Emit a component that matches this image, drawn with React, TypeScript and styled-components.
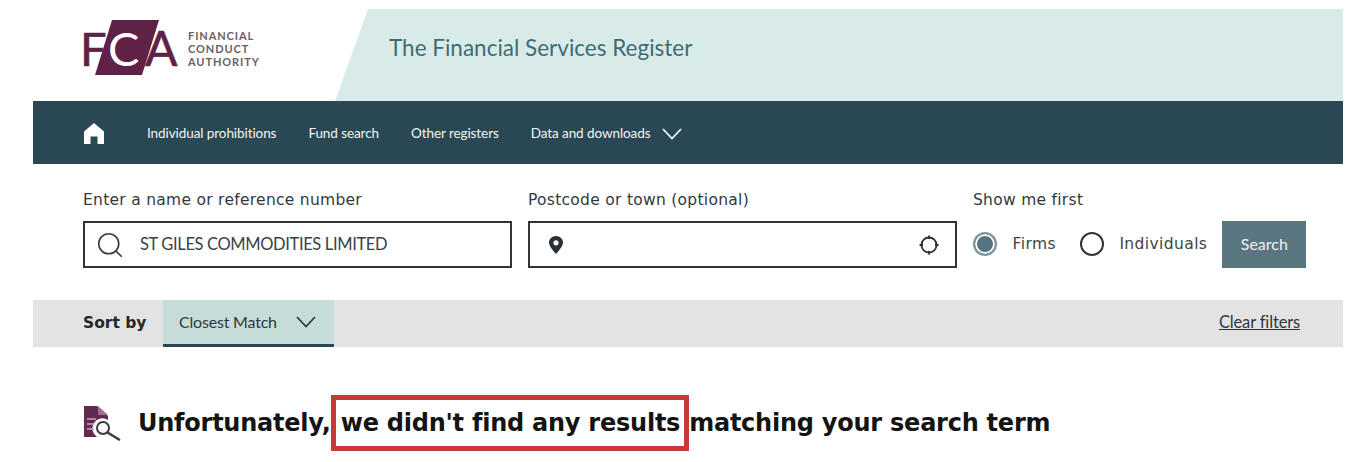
import styled, { createGlobalStyle } from "styled-components";
import { Search as SearchIcon } from "lucide-react";

const GlobalStyle = createGlobalStyle`
  html, body {
    margin: 0;
    background: #fff;
  }
`;

const NAV_ITEMS = ["Individual prohibitions", "Fund search", "Other registers"];

const FcaLogo = () => (
  <svg width="103" height="58" viewBox="-4 0 103 58" aria-label="FCA">
    <polygon points="28,0 75,0 58,55 11,55" fill="#5f2145" />
    <text x="-4" y="46" fontFamily="Lato, sans-serif" fontSize="47" fill="#5f2145" stroke="#5f2145" strokeWidth="0.6">F</text>
    <text x="24" y="46" fontFamily="Lato, sans-serif" fontSize="47" fill="#fff">C</text>
    <text x="61" y="46" fontFamily="Lato, sans-serif" fontSize="48" fill="#5f2145" stroke="#5f2145" strokeWidth="0.6">A</text>
  </svg>
);

const HomeIcon = () => (
  <svg width="22" height="22" viewBox="0 0 22 22">
    <path d="M11 1 L21 9.5 V22 H14.5 V14.5 H7.5 V22 H1 V9.5 Z" fill="#fff" />
  </svg>
);

const Chevron = () => (
  <svg width="20" height="12" viewBox="0 0 20 12" fill="none" stroke="currentColor" strokeWidth="1.8">
    <path d="M1 1 L10 10.5 L19 1" />
  </svg>
);

const PinIcon = () => (
  <svg width="16" height="20" viewBox="0 0 16 20">
    <path
      fillRule="evenodd"
      d="M8 1C4 1 1 4 1 7.6 1 12 8 19 8 19s7-7 7-11.4C15 4 12 1 8 1Zm0 4.2a2.6 2.6 0 1 1 0 5.2 2.6 2.6 0 0 1 0-5.2Z"
      fill="#2a2f33"
    />
  </svg>
);

const LocateIcon = () => (
  <svg width="20" height="20" viewBox="0 0 20 20" fill="none" stroke="#2a2f33">
    <circle cx="10" cy="10" r="7.5" strokeWidth="1.8" />
    <path d="M10 0.5v3.5M10 16v3.5M0.5 10h3.5M16 10h3.5" strokeWidth="1.8" />
  </svg>
);

const ResultsIcon = () => (
  <svg width="38" height="36" viewBox="0 0 38 36">
    <path d="M1 1 H14 L25 11 V15 A9 9 0 0 0 14 32 H1 Z" fill="#622a50" />
    <path d="M15 1 L25 10 H15 Z" fill="#9c6f8b" />
    <path d="M4 14h9M4 19h7M4 24h7" stroke="#c9a9bc" strokeWidth="1.6" />
    <circle cx="20" cy="23" r="6" fill="#fff" stroke="#3b3b40" strokeWidth="2" />
    <path d="M24.5 27.5 L36 34.5" stroke="#3b3b40" strokeWidth="2.6" strokeLinecap="round" />
  </svg>
);

export default function App() {
  return (
    <Page>
      <GlobalStyle />
      <Header>
        <LogoBlock>
          <FcaLogo />
          <LogoWords>
            <span>FINANCIAL</span>
            <span>CONDUCT</span>
            <span>AUTHORITY</span>
          </LogoWords>
        </LogoBlock>
        <TitleBand>
          <Title>The Financial Services Register</Title>
        </TitleBand>
      </Header>

      <Nav>
        <HomeLink><HomeIcon /></HomeLink>
        {NAV_ITEMS.map((item) => (
          <NavLink key={item}>{item}</NavLink>
        ))}
        <NavLink>
          Data and downloads
          <Chevron />
        </NavLink>
      </Nav>

      <SearchForm>
        <Field>
          <FieldLabel>Enter a name or reference number</FieldLabel>
          <InputBox>
            <SearchIcon size={30} strokeWidth={1.3} color="#3a3f42" />
            <InputText>ST GILES COMMODITIES LIMITED</InputText>
          </InputBox>
        </Field>
        <Field>
          <FieldLabel>Postcode or town (optional)</FieldLabel>
          <InputBox $tight>
            <PinIcon />
            <LocateIcon />
          </InputBox>
        </Field>
        <RadioField>
          <FieldLabel>Show me first</FieldLabel>
          <RadioRow>
            <RadioOption>
              <Radio $checked />
              Firms
            </RadioOption>
            <RadioOption>
              <Radio />
              Individuals
            </RadioOption>
            <SearchButton>Search</SearchButton>
          </RadioRow>
        </RadioField>
      </SearchForm>

      <SortBar>
        <SortLabel>Sort by</SortLabel>
        <SortSelect>
          Closest Match
          <Chevron />
        </SortSelect>
        <ClearFilters>Clear filters</ClearFilters>
      </SortBar>

      <Message>
        <ResultsIcon />
        <MessageText>
          Unfortunately,<Highlight>we didn't find any results</Highlight>matching your search term
        </MessageText>
      </Message>
    </Page>
  );
}

const Page = styled.div`
  width: 1310px;
  margin-left: 33px;
  padding-top: 9px;
  height: 453px;
  overflow: hidden;
`;

const Header = styled.header`
  display: flex;
  height: 92px;
`;

const LogoBlock = styled.div`
  width: 302px;
  display: flex;
  align-items: flex-start;
  padding: 11px 0 0 47px;
  box-sizing: border-box;
`;

const LogoWords = styled.div`
  display: flex;
  flex-direction: column;
  margin: 9px 0 0 5px;
  font: 700 11px/13px "Lato", sans-serif;
  letter-spacing: 0.9px;
  color: #6a5f69;
`;

const TitleBand = styled.div`
  flex: 1;
  display: flex;
  align-items: center;
  padding: 0 0 15px 54px;
  background: #d9ebe9;
  clip-path: polygon(33px 0, 100% 0, 100% 100%, 0 100%);
`;

const Title = styled.h1`
  margin: 0;
  font: 400 22.5px "Lato", sans-serif;
  color: #3f6b73;
`;

const Nav = styled.nav`
  height: 63px;
  display: flex;
  align-items: center;
  padding-left: 50px;
  background: #2a4853;
`;

const HomeLink = styled.a`
  display: flex;
  margin-right: 42px;
`;

const NavLink = styled.a`
  display: flex;
  align-items: center;
  gap: 12px;
  margin-right: 32px;
  font: 400 13.5px "Lato", sans-serif;
  letter-spacing: -0.08px;
  color: #f1f5f5;

  & svg {
    margin-top: 3px;
  }
`;

const SearchForm = styled.form`
  display: flex;
  gap: 16px;
  height: 136px;
  padding: 26px 0 0 50px;
  box-sizing: border-box;
`;

const Field = styled.div`
  width: 429px;
`;

const RadioField = styled.div`
  flex: 1;
`;

const FieldLabel = styled.div`
  height: 31px;
  font: 400 15.5px/20px "DejaVu Sans", sans-serif;
  letter-spacing: 0.28px;
  color: #333a3e;
`;

const InputBox = styled.div<{ $tight?: boolean }>`
  display: flex;
  align-items: center;
  justify-content: ${(p) => (p.$tight ? "space-between" : "flex-start")};
  gap: 15px;
  height: 47px;
  padding: 0 16px 0 ${(p) => (p.$tight ? "18px" : "10px")};
  box-sizing: border-box;
  border: 2px solid #2f3437;
  background: #fff;
`;

const InputText = styled.span`
  padding-bottom: 2px;
  font: 400 16.5px "Lato", sans-serif;
  letter-spacing: -0.36px;
  color: #3b4145;
`;

const RadioRow = styled.div`
  display: flex;
  align-items: center;
  height: 47px;
`;

const RadioOption = styled.label`
  display: flex;
  align-items: center;
  gap: 15.5px;
  margin: 0 24px 2px 0;
  font: 400 15.5px "DejaVu Sans", sans-serif;
  letter-spacing: 0.4px;
  color: #3d4448;
`;

const Radio = styled.span<{ $checked?: boolean }>`
  width: 24px;
  height: 24px;
  box-sizing: border-box;
  border-radius: 50%;
  border: 2px solid ${(p) => (p.$checked ? "#7d969d" : "#2f3437")};
  background: ${(p) => (p.$checked ? "#557380" : "#fff")};
  box-shadow: ${(p) => (p.$checked ? "inset 0 0 0 2px #fff" : "none")};
`;

const SearchButton = styled.button`
  width: 84px;
  height: 47px;
  margin-left: -9px;
  padding: 0 0 2px;
  border: 0;
  background: #5a7680;
  font: 400 16px "Lato", sans-serif;
  color: #eef3f4;
`;

const SortBar = styled.div`
  display: flex;
  align-items: stretch;
  height: 47px;
  padding: 0 43px 0 50px;
  background: #e3e3e3;
`;

const SortLabel = styled.span`
  align-self: center;
  width: 80px;
  margin-bottom: 1px;
  font: 700 15.5px "DejaVu Sans", sans-serif;
  color: #24282b;
`;

const SortSelect = styled.div`
  display: flex;
  align-items: center;
  gap: 19px;
  padding: 0 18px 1px 16px;
  box-sizing: border-box;
  background: #c6dcd9;
  border-bottom: 3px solid #2a4853;
  font: 400 16px "Lato", sans-serif;
  letter-spacing: -0.2px;
  color: #30383c;
`;

const ClearFilters = styled.a`
  align-self: center;
  margin: 0 0 3px auto;
  font: 400 16.5px "Lato", sans-serif;
  letter-spacing: -0.15px;
  color: #30383c;
  text-decoration: underline;
`;

const Message = styled.div`
  display: flex;
  align-items: center;
  gap: 17px;
  margin-top: 58px;
  padding-left: 50px;
`;

const MessageText = styled.p`
  margin: 0;
  font: 700 24px/34px "DejaVu Sans", sans-serif;
  letter-spacing: -0.24px;
  color: #141414;
  white-space: nowrap;
`;

const Highlight = styled.span`
  display: inline-block;
  padding: 6px 4px 6px 5px;
  border: 5px solid #c73a3a;
  margin: -11px 0;
`;
